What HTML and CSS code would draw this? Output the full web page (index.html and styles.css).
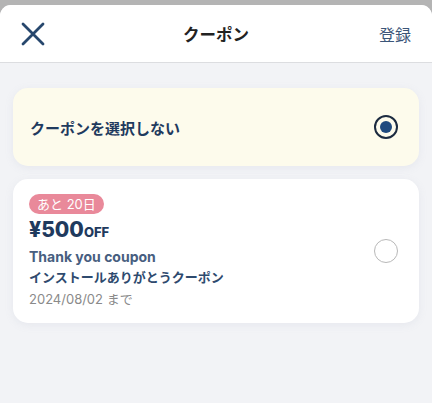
FILE: index.html
```html
<!DOCTYPE html>
<html lang="ja">
<head>
<meta charset="utf-8">
<link rel="stylesheet" href="styles.css">
</head>
<body>
<div class="screen">
  <div class="sheet">
    <header class="header">
      <button class="close" aria-label="close">
        <svg width="24" height="24" viewBox="0 0 24 24"><path d="M2 2L22 22M22 2L2 22" stroke="#27476d" stroke-width="2.8" stroke-linecap="round" fill="none"/></svg>
      </button>
      <div class="title">クーポン</div>
      <div class="register">登録</div>
    </header>
    <main class="content">
      <div class="card card-none">
        <div class="none-label">クーポンを選択しない</div>
        <span class="radio radio-on"><span class="dot"></span></span>
      </div>
      <div class="card card-coupon">
        <div class="coupon-info">
          <span class="badge">あと 20日</span>
          <div class="amount"><span class="yen">¥500</span><span class="off">OFF</span></div>
          <div class="name-en">Thank you coupon</div>
          <div class="name-ja">インストールありがとうクーポン</div>
          <div class="expire">2024/08/02 まで</div>
        </div>
        <span class="radio radio-off"></span>
      </div>
    </main>
  </div>
</div>
</body>
</html>
```

FILE: styles.css
```css
html, body {
  margin: 0;
  padding: 0;
}
body {
  width: 432px;
  height: 403px;
  overflow: hidden;
  background: #b4b4b4;
  font-family: "Inter", "Noto Sans CJK JP", sans-serif;
}
.screen {
  padding-top: 5px;
  height: 398px;
}
.sheet {
  height: 100%;
  background: #f2f3f6;
  border-radius: 11px 11px 0 0;
  overflow: hidden;
}
.header {
  height: 57px;
  background: #fff;
  border-bottom: 1.5px solid #dcdde0;
  display: flex;
  align-items: center;
  justify-content: space-between;
  padding: 0 21px 0 21px;
  position: relative;
}
.close {
  border: 0;
  background: none;
  padding: 0;
  width: 24px;
  height: 24px;
  display: flex;
}
.title {
  position: absolute;
  left: 0;
  right: 0;
  text-align: center;
  font-size: 16.5px;
  font-weight: 700;
  color: #222;
  pointer-events: none;
}
.register {
  font-size: 16px;
  color: #3b5578;
}
.content {
  padding: 25px 13px 0 13px;
  display: flex;
  flex-direction: column;
  gap: 13px;
}
.card {
  border-radius: 15px;
  display: flex;
  align-items: center;
  justify-content: space-between;
  box-shadow: 0 2px 8px rgba(150, 160, 180, 0.12);
}
.card-none {
  background: #fdfbec;
  height: 78px;
  padding: 0 21px 0 17px;
}
.none-label {
  font-size: 15px;
  font-weight: 700;
  color: #1f3a5e;
}
.radio {
  width: 24px;
  height: 24px;
  border-radius: 50%;
  box-sizing: border-box;
  display: flex;
  align-items: center;
  justify-content: center;
  flex-shrink: 0;
}
.radio-on {
  border: 2.5px solid #1c2b40;
}
.dot {
  width: 12px;
  height: 12px;
  border-radius: 50%;
  background: #1f4a7e;
}
.radio-off {
  border: 1.8px solid #b8b8b8;
}
.card-coupon {
  background: #fff;
  height: 144px;
  padding: 0 21px 0 16px;
}
.coupon-info {
  display: flex;
  flex-direction: column;
  align-items: flex-start;
  padding-top: 2px;
}
.badge {
  background: #e9899a;
  color: #fff;
  font-size: 13px;
  line-height: 20px;
  height: 20px;
  padding: 0 8px;
  border-radius: 10px;
}
.amount {
  color: #1f3a5e;
  font-weight: 700;
  line-height: 26px;
  margin-top: 3px;
}
.yen {
  font-size: 21px;
  font-weight: 800;
}
.off {
  font-size: 13px;
  font-weight: 800;
}
.name-en {
  font-size: 14px;
  font-weight: 700;
  color: #475e80;
  line-height: 20px;
  margin-top: 2px;
}
.name-ja {
  font-size: 13px;
  font-weight: 700;
  color: #2e4a6e;
  line-height: 20px;
}
.expire {
  font-size: 13px;
  color: #8a8a8a;
  line-height: 22px;
  margin-top: 1px;
}
```
